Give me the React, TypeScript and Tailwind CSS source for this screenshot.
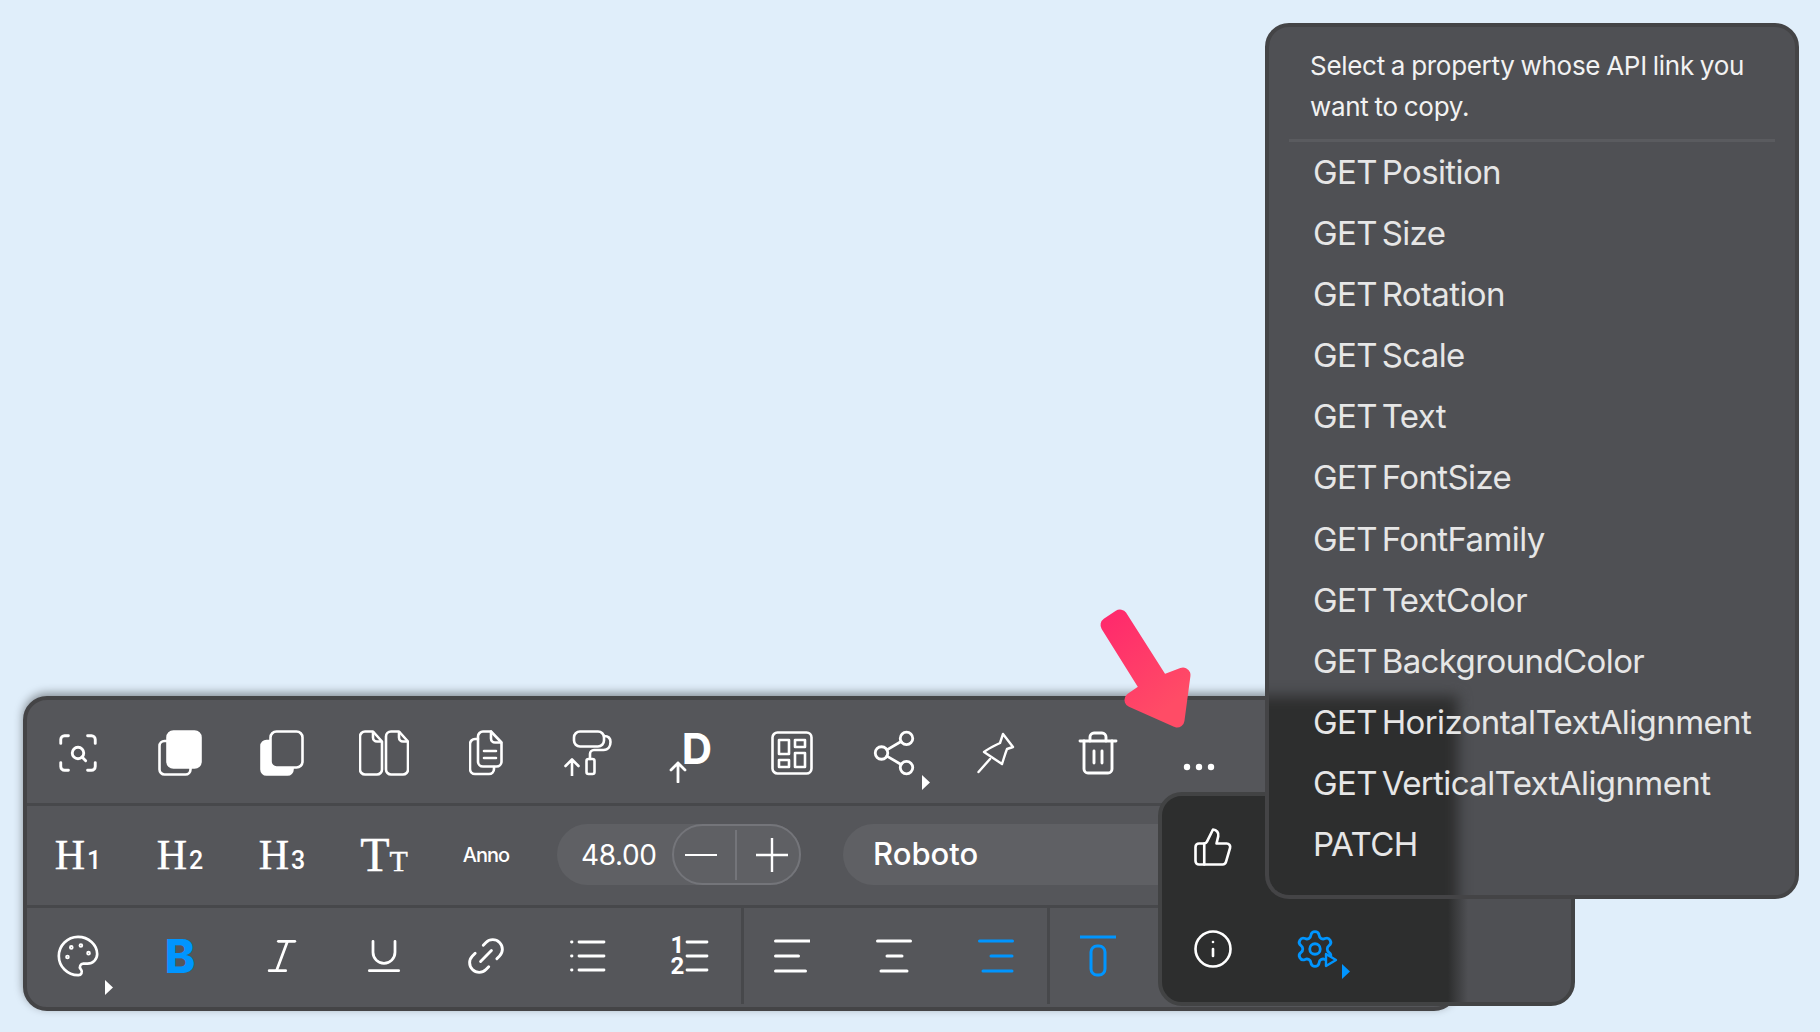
import React from "react";
import { Info, Italic, Palette, ScanSearch, Settings, Share2, ThumbsUp, Trash2, Underline, Link2 } from "lucide-react";

const BLUE = "#0095ff";

const Cell = ({ children, className = "" }: { children?: React.ReactNode; className?: string }) => (
  <div className={`relative flex h-full w-[102px] shrink-0 items-center justify-center ${className}`}>{children}</div>
);

const Caret = ({ color = "#ffffff", className = "" }: { color?: string; className?: string }) => (
  <svg width="8" height="15" viewBox="0 0 8 15" className={`absolute ${className}`}>
    <path d="M0 0 L8 7.5 L0 15 Z" fill={color} />
  </svg>
);

const CopyFront = () => (
  <svg width="44" height="46" viewBox="0 0 44 46" fill="none" stroke="#fff" strokeWidth="2.6">
    <rect x="1.500" y="11" width="31" height="33.500" rx="5" />
    <rect x="9.500" y="1.500" width="33" height="36" rx="6" fill="#fff" />
  </svg>
);

const CopyBack = () => (
  <svg width="44" height="46" viewBox="0 0 44 46" fill="none" stroke="#fff" strokeWidth="2.6">
    <rect x="1.500" y="11" width="31" height="33.500" rx="5" fill="#fff" />
    <rect x="10.500" y="1.500" width="32" height="36" rx="6" fill="#55565a" />
  </svg>
);

const Pages = () => (
  <svg width="50" height="46" viewBox="0 0 50 46" fill="none" stroke="#fff" strokeWidth="2.6" strokeLinejoin="round">
    <path d="M6 1.500h8l9 10v28a5 5 0 0 1-5 5H6a5 5 0 0 1-5-5v-33a5 5 0 0 1 5-5z" />
    <path d="M14 1.500v6a4 4 0 0 0 4 4h5" />
    <path d="M32 1.500h8l9 10v28a5 5 0 0 1-5 5H32a5 5 0 0 1-5-5v-33a5 5 0 0 1 5-5z" />
    <path d="M40 1.500v6a4 4 0 0 0 4 4h5" />
  </svg>
);

const DocStack = () => (
  <svg width="34" height="46" viewBox="0 0 34 46" fill="none" stroke="#fff" strokeWidth="2.6" strokeLinejoin="round" strokeLinecap="round">
    <path d="M9 9H6a5 5 0 0 0-5 5v25a5 5 0 0 0 5 5h14a5 5 0 0 0 5-5v-2" />
    <path d="M14 1.500h8l10.500 11v19a5 5 0 0 1-5 5H14a5 5 0 0 1-5-5v-25a5 5 0 0 1 5-5z" />
    <path d="M22 1.500v7a4 4 0 0 0 4 4h6" />
    <path d="M15 21h12M15 28h12" />
  </svg>
);

const Roller = () => (
  <svg width="48" height="46" viewBox="0 0 48 46" fill="none" stroke="#fff" strokeWidth="2.6" strokeLinejoin="round" strokeLinecap="round">
    <rect x="10" y="1.500" width="30" height="15" rx="6" />
    <path d="M40 6c4 0 6.500 2 6.500 6s-2 8-7 8H30a4 4 0 0 0-4 4v5" />
    <rect x="22.500" y="29" width="8" height="15" rx="2" />
    <path d="M8 46V30M1.500 36L8 29.500 14.500 36" />
  </svg>
);

const GridIcon = () => (
  <svg width="42" height="44" viewBox="0 0 42 44" fill="none" stroke="#fff" strokeWidth="2.6" strokeLinejoin="round">
    <rect x="1.500" y="1.500" width="39" height="41" rx="5" />
    <rect x="8" y="9" width="10" height="14" />
    <rect x="24" y="9" width="10" height="7" />
    <rect x="8" y="29" width="10" height="7" />
    <rect x="24" y="22" width="10" height="14" />
  </svg>
);

const PushPin = () => (
  <svg width="38" height="42" viewBox="0 0 38 42" fill="none" stroke="#fff" strokeWidth="2.4" strokeLinejoin="round" strokeLinecap="round">
    <path d="M1.500 40L13 27" />
    <path d="M26 2L36 15L30 17C28 22 27 26 25 32L7 20C12 16 17 14 23 11Z" />
  </svg>
);

const Dots = () => (
  <svg width="32" height="8" viewBox="0 0 32 8" fill="#fff" className="ml-[-2px] mt-[28px]">
    <circle cx="4" cy="4" r="3.200" />
    <circle cx="16" cy="4" r="3.200" />
    <circle cx="28" cy="4" r="3.200" />
  </svg>
);

const ListBullets = () => (
  <svg width="36" height="34" viewBox="0 0 36 34" fill="none" stroke="#fff" strokeWidth="2.800" strokeLinecap="round">
    <path d="M9 3h25M9 17h25M9 31h25" />
    <path d="M1.500 3h.5M1.500 17h.5M1.500 31h.5" />
  </svg>
);

const ListNumbers = () => (
  <div className="flex items-center gap-[1px]">
    <span className="font-['Roboto',sans-serif] text-[24px] font-bold leading-[21px] text-white">
      1
      <br />
      2
    </span>
    <svg width="24" height="34" viewBox="0 0 24 34" fill="none" stroke="#fff" strokeWidth="2.800" strokeLinecap="round">
      <path d="M2 3h20M2 17h20M2 31h20" />
    </svg>
  </div>
);

const AlignIcon = ({ d, color = "#fff" }: { d: string; color?: string }) => (
  <svg width="36" height="34" viewBox="0 0 36 34" fill="none" stroke={color} strokeWidth="3" strokeLinecap="round">
    <path d={d} />
  </svg>
);

const VerticalTop = () => (
  <svg width="36" height="42" viewBox="0 0 36 42" fill="none" stroke={BLUE} strokeWidth="3">
    <path d="M0 2h36" />
    <rect x="11" y="11" width="14" height="29" rx="6" />
  </svg>
);

const HeadingIcon = ({ n }: { n: number }) => (
  <div className="flex items-baseline text-white">
    <span className="font-['Liberation_Serif',serif] text-[42px] leading-none [-webkit-text-stroke:0.4px_white]">H</span>
    <span className="ml-[2px] font-['Roboto',sans-serif] text-[25px] font-medium leading-none">{n}</span>
  </div>
);

const menuItems = [
  "GET Position",
  "GET Size",
  "GET Rotation",
  "GET Scale",
  "GET Text",
  "GET FontSize",
  "GET FontFamily",
  "GET TextColor",
  "GET BackgroundColor",
  "GET HorizontalTextAlignment",
  "GET VerticalTextAlignment",
  "PATCH",
];

const Toolbar = () => (
  <div className="h-[315px] w-[1435px] overflow-hidden rounded-[24px] border-4 border-[#444446] bg-[#55565a] shadow-[0_-3px_10px_rgba(0,0,0,0.4)]">
    <div className="flex h-[106px] border-b-[3px] border-[#47484b] pt-[2px]">
      <Cell><ScanSearch size={46} color="#fff" strokeWidth={1.500} /></Cell>
      <Cell><CopyFront /></Cell>
      <Cell><CopyBack /></Cell>
      <Cell><Pages /></Cell>
      <Cell><DocStack /></Cell>
      <Cell><Roller /></Cell>
      <Cell>
        <svg width="18" height="23" viewBox="0 0 18 23" fill="none" stroke="#fff" strokeWidth="2.800" strokeLinecap="round" strokeLinejoin="round" className="absolute left-[30px] top-[58px]">
          <path d="M9 22V3M2 10l7-7 7 7" />
        </svg>
        <span className="ml-[14px] mt-[-8px] font-['Inter',sans-serif] text-[42px] font-bold leading-none text-white">D</span>
      </Cell>
      <Cell><GridIcon /></Cell>
      <Cell>
        <Share2 size={50} color="#fff" strokeWidth={1.350} />
        <Caret className="left-[79px] top-[73px]" />
      </Cell>
      <Cell><PushPin /></Cell>
      <Cell><Trash2 size={48} color="#fff" strokeWidth={1.450} /></Cell>
      <Cell><Dots /></Cell>
    </div>
    <div className="flex h-[102px] items-center border-b-[3px] border-[#47484b] pb-[2px]">
      <Cell><HeadingIcon n={1} /></Cell>
      <Cell><HeadingIcon n={2} /></Cell>
      <Cell><HeadingIcon n={3} /></Cell>
      <Cell>
        <div className="flex items-baseline text-white">
          <span className="font-['Liberation_Serif',serif] text-[48px] leading-none [-webkit-text-stroke:0.4px_white]">T</span>
          <span className="font-['Liberation_Serif',serif] text-[30px] leading-none [-webkit-text-stroke:0.4px_white]">T</span>
        </div>
      </Cell>
      <Cell>
        <span className="font-['Inter',sans-serif] text-[20px] font-medium tracking-[-1px] text-white">Anno</span>
      </Cell>
      <div className="ml-[20px] flex h-[61px] w-[244px] shrink-0 items-center rounded-full bg-[#5f6064]">
        <span className="ml-[24px] w-[91px] font-['Inter',sans-serif] text-[28px] tracking-[-0.400px] text-white">48.00</span>
        <div className="flex h-full flex-1 items-center rounded-full border-2 border-[#74757a]">
          <div className="flex h-[50px] flex-1 items-center justify-center border-r-2 border-[#74757a] pr-[6px]">
            <div className="h-[2px] w-[32px] bg-white" />
          </div>
          <div className="flex h-[50px] flex-1 items-center justify-center pl-[8px]">
            <svg width="32" height="34" viewBox="0 0 32 34" fill="none" stroke="#fff" strokeWidth="2.400"><path d="M0 17h32M16 0v34" /></svg>
          </div>
        </div>
      </div>
      <div className="ml-[42px] flex h-[61px] flex-1 items-center rounded-l-full bg-[#5f6064] pl-[30px]">
        <span className="font-['Inter',sans-serif] text-[31px] font-medium text-white">Roboto</span>
      </div>
    </div>
    <div className="flex h-[99px] pb-[3px]">
      <Cell>
        <Palette size={46} color="#fff" strokeWidth={1.400} />
        <Caret className="left-[78px] top-[72px]" />
      </Cell>
      <Cell><span className="font-['Inter',sans-serif] text-[46px] font-extrabold leading-none text-[#0095ff]">B</span></Cell>
      <Cell><Italic size={44} color="#fff" strokeWidth={1.500} /></Cell>
      <Cell><Underline size={44} color="#fff" strokeWidth={1.500} /></Cell>
      <Cell><Link2 size={46} color="#fff" strokeWidth={1.500} className="-rotate-45" /></Cell>
      <Cell><ListBullets /></Cell>
      <Cell><ListNumbers /></Cell>
      <Cell className="border-l-[3px] border-[#47484b] pr-[4px]"><AlignIcon d="M1.500 2h34M1.500 17h23M1.500 32h30" /></Cell>
      <Cell><AlignIcon d="M1.500 2h33M11 17h15M5 32h26" /></Cell>
      <Cell><AlignIcon d="M1.500 2h33M13 17h21M5 32h29" color={BLUE} /></Cell>
      <Cell className="border-l-[3px] border-[#47484b] pr-[4px]"><VerticalTop /></Cell>
    </div>
  </div>
);

const ActionsPopover = () => (
  <div className="absolute left-[1158px] top-[792px] flex h-[214px] w-[417px] flex-col rounded-[24px] border-4 border-[#424344] bg-[linear-gradient(to_right,#2d2e2e_286px,#4f5054_306px)]">
    <div className="flex h-[102px]">
      <Cell><ThumbsUp size={42} color="#fff" strokeWidth={1.500} /></Cell>
    </div>
    <div className="flex h-[102px]">
      <Cell><Info size={42} color="#fff" strokeWidth={1.500} /></Cell>
      <Cell>
        <Settings size={42} color={BLUE} strokeWidth={1.600} />
        <svg width="14" height="16" viewBox="0 0 14 16" className="absolute left-[60px] top-[54px]" fill="#2d2e2e" stroke={BLUE} strokeWidth="2.400" strokeLinejoin="round">
          <path d="M2 2l10 6-10 6z" />
        </svg>
        <Caret color={BLUE} className="left-[78px] top-[66px]" />
      </Cell>
    </div>
  </div>
);

const ApiMenu = () => (
  <div className="absolute left-[1265px] top-[23px] h-[876px] w-[534px] overflow-hidden rounded-[24px] border-4 border-[#444446] bg-[#4f5054]">
    <div className="absolute left-[-30px] top-[669px] h-[260px] w-[219px] bg-[#2d2e2e] blur-[7px]" />
    <div className="relative mx-[20px] border-b-[3px] border-[#5a5b5f] pb-[12px] pl-[21px] pt-[19px] font-['Inter',sans-serif] text-[26px] leading-[40.600px] tracking-[-0.300px] text-[#f2f2f2] [word-spacing:-1px]">
      Select a property whose API link you want to copy.
    </div>
    <div className="relative flex flex-col pl-[44px]">
      {menuItems.map((item) => (
        <div key={item} className="flex h-[61.100px] items-center font-['Inter',sans-serif] text-[33px] tracking-[-0.600px] text-[#e6e6e6] [word-spacing:-4px]">
          {item}
        </div>
      ))}
    </div>
  </div>
);

const PointerArrow = () => (
  <svg width="110" height="140" viewBox="0 0 110 140" className="absolute left-[1090px] top-[600px]">
    <defs>
      <linearGradient id="arrowFill" x1="0" y1="0" x2="0.6" y2="1">
        <stop offset="0" stopColor="#ff2a6c" />
        <stop offset="1" stopColor="#ff4c66" />
      </linearGradient>
    </defs>
    <path
      d="M18 25L30 17L72 83L93 75L87 120L42 100L58 89Z"
      fill="url(#arrowFill)"
      stroke="url(#arrowFill)"
      strokeWidth="15"
      strokeLinejoin="round"
    />
  </svg>
);

export default function App() {
  return (
    <div className="relative h-[1032px] w-[1820px] overflow-hidden bg-[#e0eefa] pl-[23px] pt-[696px]">
      <Toolbar />
      <ActionsPopover />
      <ApiMenu />
      <PointerArrow />
    </div>
  );
}
